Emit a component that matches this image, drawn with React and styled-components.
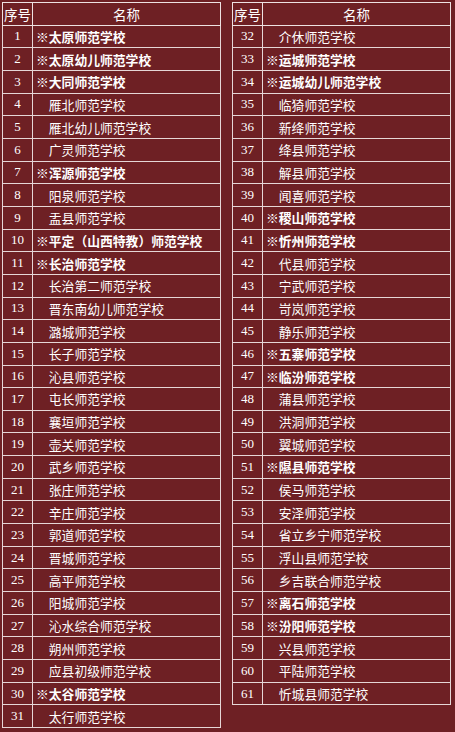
import React from "react";
import styled, { createGlobalStyle } from "styled-components";

const GlobalStyle = createGlobalStyle`
  html, body {
    margin: 0;
    padding: 0;
    background-color: #6e2024;
  }
`;

const Page = styled.div`
  display: flex;
  align-items: flex-start;
  gap: 11px;
  width: 455px;
  height: 732px;
  box-sizing: border-box;
  padding: 2px 0 0 2px;
  background-color: #6e2024;
  overflow: hidden;
`;

const Table = styled.table`
  width: 219px;
  border-collapse: collapse;
  table-layout: fixed;
  border: 1px solid #eee2e2;
  color: #ffffff;
`;

const Row = styled.tr`
  height: 22.66px;
`;

const HeadCell = styled.th`
  padding: 0;
  border: 1px solid #eee2e2;
  font-family: "Noto Sans CJK SC", "Noto Sans", sans-serif;
  font-size: 13.5px;
  font-weight: 400;
  text-align: center;
  width: ${(props) => (props.$narrow ? "29px" : "auto")};
`;

const NumCell = styled.td`
  padding: 0;
  border: 1px solid #e6d6d6;
  font-family: "Liberation Serif", "Times New Roman", serif;
  font-size: 13px;
  text-align: center;
`;

const NameCell = styled.td`
  padding: 0 0 0 3px;
  border: 1px solid #e6d6d6;
  font-family: "Noto Sans CJK SC", "Noto Sans", sans-serif;
  font-size: 12.8px;
  font-weight: ${(props) => (props.$key ? 700 : 400)};
  white-space: nowrap;
  overflow: hidden;
`;

const left = [
  ["※太原师范学校", true],
  ["※太原幼儿师范学校", true],
  ["※大同师范学校", true],
  ["雁北师范学校"],
  ["雁北幼儿师范学校"],
  ["广灵师范学校"],
  ["※浑源师范学校", true],
  ["阳泉师范学校"],
  ["盂县师范学校"],
  ["※平定（山西特教）师范学校", true],
  ["※长治师范学校", true],
  ["长治第二师范学校"],
  ["晋东南幼儿师范学校"],
  ["潞城师范学校"],
  ["长子师范学校"],
  ["沁县师范学校"],
  ["屯长师范学校"],
  ["襄垣师范学校"],
  ["壶关师范学校"],
  ["武乡师范学校"],
  ["张庄师范学校"],
  ["辛庄师范学校"],
  ["郭道师范学校"],
  ["晋城师范学校"],
  ["高平师范学校"],
  ["阳城师范学校"],
  ["沁水综合师范学校"],
  ["朔州师范学校"],
  ["应县初级师范学校"],
  ["※太谷师范学校", true],
  ["太行师范学校"],
];

const right = [
  ["介休师范学校"],
  ["※运城师范学校", true],
  ["※运城幼儿师范学校", true],
  ["临猗师范学校"],
  ["新绛师范学校"],
  ["绛县师范学校"],
  ["解县师范学校"],
  ["闻喜师范学校"],
  ["※稷山师范学校", true],
  ["※忻州师范学校", true],
  ["代县师范学校"],
  ["宁武师范学校"],
  ["岢岚师范学校"],
  ["静乐师范学校"],
  ["※五寨师范学校", true],
  ["※临汾师范学校", true],
  ["蒲县师范学校"],
  ["洪洞师范学校"],
  ["翼城师范学校"],
  ["※隰县师范学校", true],
  ["侯马师范学校"],
  ["安泽师范学校"],
  ["省立乡宁师范学校"],
  ["浮山县师范学校"],
  ["乡吉联合师范学校"],
  ["※离石师范学校", true],
  ["※汾阳师范学校", true],
  ["兴县师范学校"],
  ["平陆师范学校"],
  ["忻城县师范学校"],
];

const SchoolTable = ({ rows, start }) => (
  <Table>
    <thead>
      <Row>
        <HeadCell $narrow>序号</HeadCell>
        <HeadCell>名称</HeadCell>
      </Row>
    </thead>
    <tbody>
      {rows.map(([name, key], i) => (
        <Row key={name}>
          <NumCell>{start + i}</NumCell>
          <NameCell $key={key}>{key ? name : "\u3000" + name}</NameCell>
        </Row>
      ))}
    </tbody>
  </Table>
);

const App = () => (
  <>
    <GlobalStyle />
    <Page>
      <SchoolTable rows={left} start={1} />
      <SchoolTable rows={right} start={32} />
    </Page>
  </>
);

export default App;
